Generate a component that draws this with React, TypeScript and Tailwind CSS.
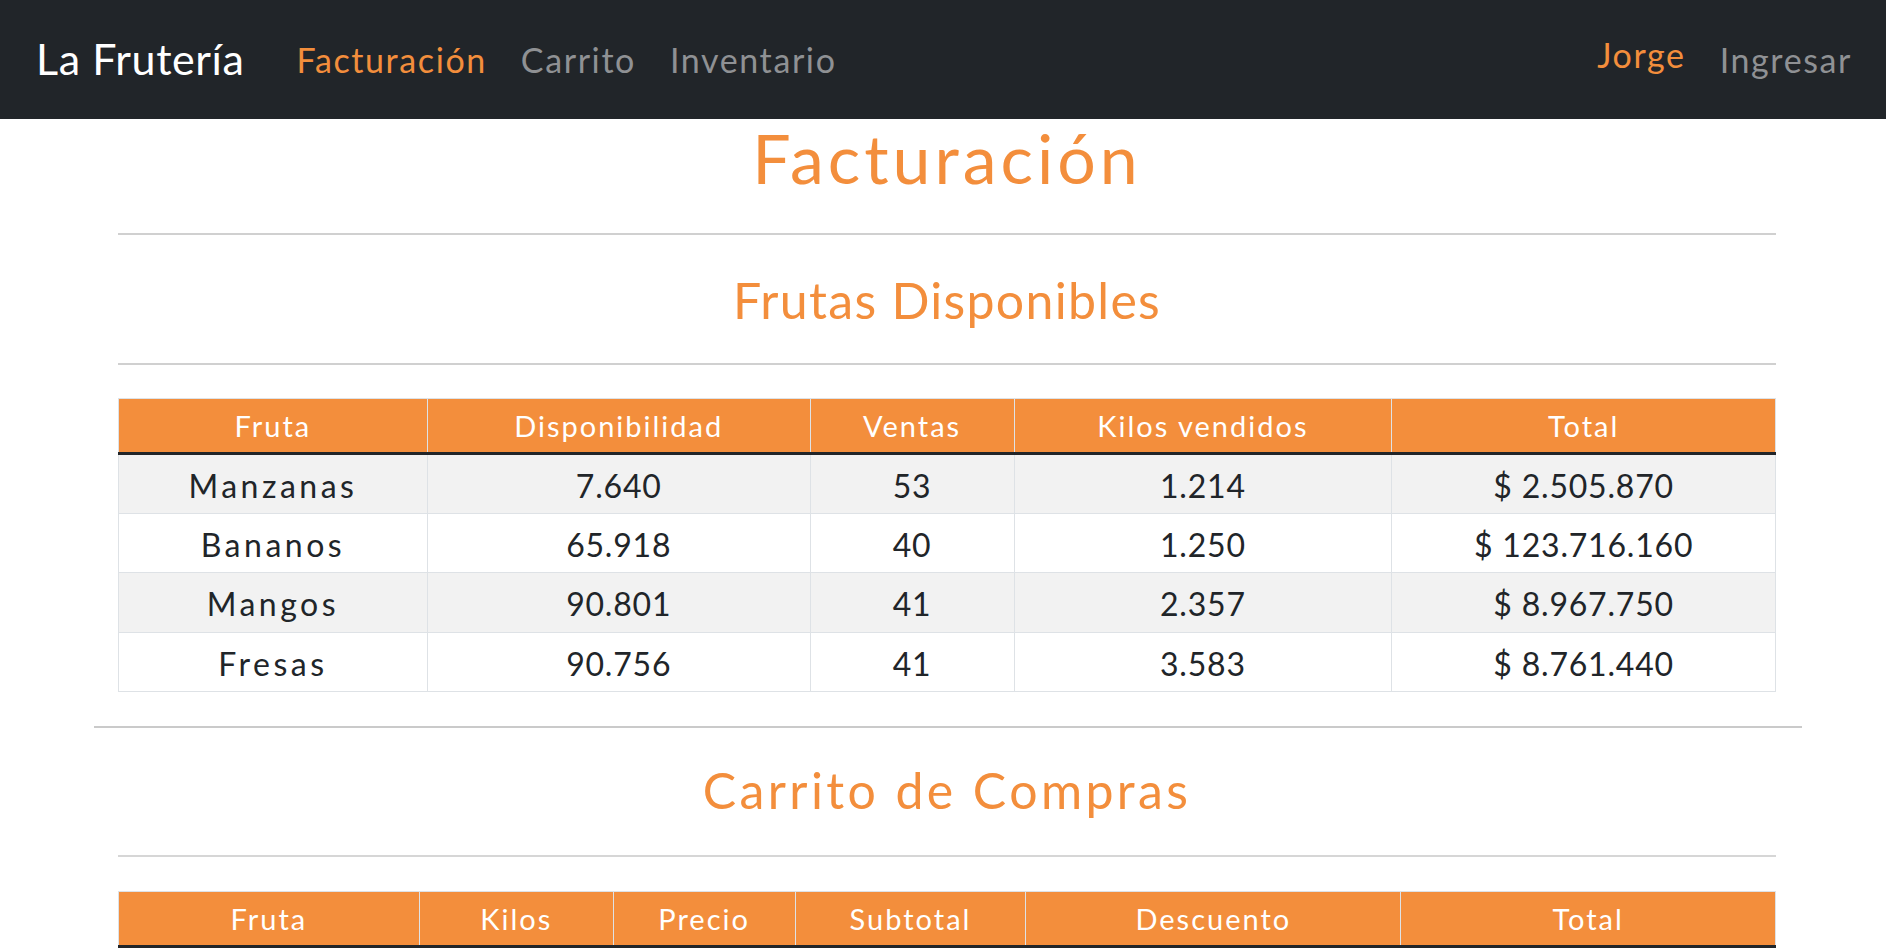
const frutas = [
  { fruta: "Manzanas", disp: "7.640", ventas: "53", kilos: "1.214", total: "$ 2.505.870" },
  { fruta: "Bananos", disp: "65.918", ventas: "40", kilos: "1.250", total: "$ 123.716.160" },
  { fruta: "Mangos", disp: "90.801", ventas: "41", kilos: "2.357", total: "$ 8.967.750" },
  { fruta: "Fresas", disp: "90.756", ventas: "41", kilos: "3.583", total: "$ 8.761.440" },
];

const headFrutas = [
  { label: "Fruta", w: "w-[309px]" },
  { label: "Disponibilidad", w: "w-[383px]" },
  { label: "Ventas", w: "w-[204px]" },
  { label: "Kilos vendidos", w: "w-[378px]" },
  { label: "Total", w: "w-[384px]" },
];

const headCarrito = [
  { label: "Fruta", w: "w-[301px]" },
  { label: "Kilos", w: "w-[194px]" },
  { label: "Precio", w: "w-[182px]" },
  { label: "Subtotal", w: "w-[231px]" },
  { label: "Descuento", w: "w-[375px]" },
  { label: "Total", w: "w-[375px]" },
];

const HeadRow = ({ cols }: { cols: { label: string; w: string }[] }) => (
  <thead>
    <tr className="bg-[#f38e3c] text-white">
      {cols.map((c) => (
        <th
          key={c.label}
          className={`${c.w} h-[55px] border border-[#dee2e6] border-b-[3px] border-b-[#212529] text-[29px] tracking-[2px] font-normal text-center align-middle`}
        >
          {c.label}
        </th>
      ))}
    </tr>
  </thead>
);

const App = () => {
  return (
    <div className="min-h-screen bg-white font-['Lato','Liberation_Sans',sans-serif] text-[#212529]">
      <nav className="h-[119px] bg-[#212529] flex items-center pl-[36px] pr-[34px]">
        <span className="text-white text-[43px] tracking-[0.6px] mr-[52px]">La Frutería</span>
        <div className="flex items-center gap-[34px] text-[34px] tracking-[1.6px]">
          <span className="text-[#f38e3c]">Facturación</span>
          <span className="text-[#8f9194]">Carrito</span>
          <span className="text-[#8f9194]">Inventario</span>
        </div>
        <div className="ml-auto flex items-center gap-[34px] text-[34px] tracking-[1.6px]">
          <span className="text-[#f38e3c] -mt-[10px]">Jorge</span>
          <span className="text-[#8f9194]">Ingresar</span>
        </div>
      </nav>

      <main className="pl-[118px] pr-[110px]">
        <h1 className="h-[114px] pt-[5px] text-center text-[68px] tracking-[4px] leading-none text-[#f38e3c]">
          Facturación
        </h1>
        <hr className="border-0 border-t-2 border-[#d0d0d0]" />

        <h2 className="h-[128px] pt-[40px] text-center text-[50px] tracking-[1.3px] leading-none text-[#f38e3c]">
          Frutas Disponibles
        </h2>
        <hr className="border-0 border-t-2 border-[#d0d0d0]" />

        <table className="mt-[33px] w-full border-collapse">
          <HeadRow cols={headFrutas} />
          <tbody>
            {frutas.map((f, i) => (
              <tr key={f.fruta} className={i % 2 === 0 ? "bg-[#f2f2f2]" : "bg-white"}>
                <td className="h-[59.6px] pt-[4px] border border-[#dee2e6] text-center align-middle text-[32px] tracking-[3.5px]">
                  {f.fruta}
                </td>
                {[f.disp, f.ventas, f.kilos, f.total].map((v, j) => (
                  <td
                    key={j}
                    className="h-[59.6px] pt-[4px] border border-[#dee2e6] text-center align-middle text-[32px] tracking-[0.8px]"
                  >
                    {v}
                  </td>
                ))}
              </tr>
            ))}
          </tbody>
        </table>

        <hr className="mt-[34px] -ml-[24px] -mr-[26px] border-0 border-t-2 border-[#cacaca]" />

        <h2 className="h-[127px] pt-[37px] text-center text-[50px] tracking-[3.4px] leading-none text-[#f38e3c]">
          Carrito de Compras
        </h2>
        <hr className="border-0 border-t-2 border-[#d6d6d6]" />

        <table className="mt-[34px] w-full border-collapse">
          <HeadRow cols={headCarrito} />
          <tbody />
        </table>
      </main>
    </div>
  );
};

export default App;
